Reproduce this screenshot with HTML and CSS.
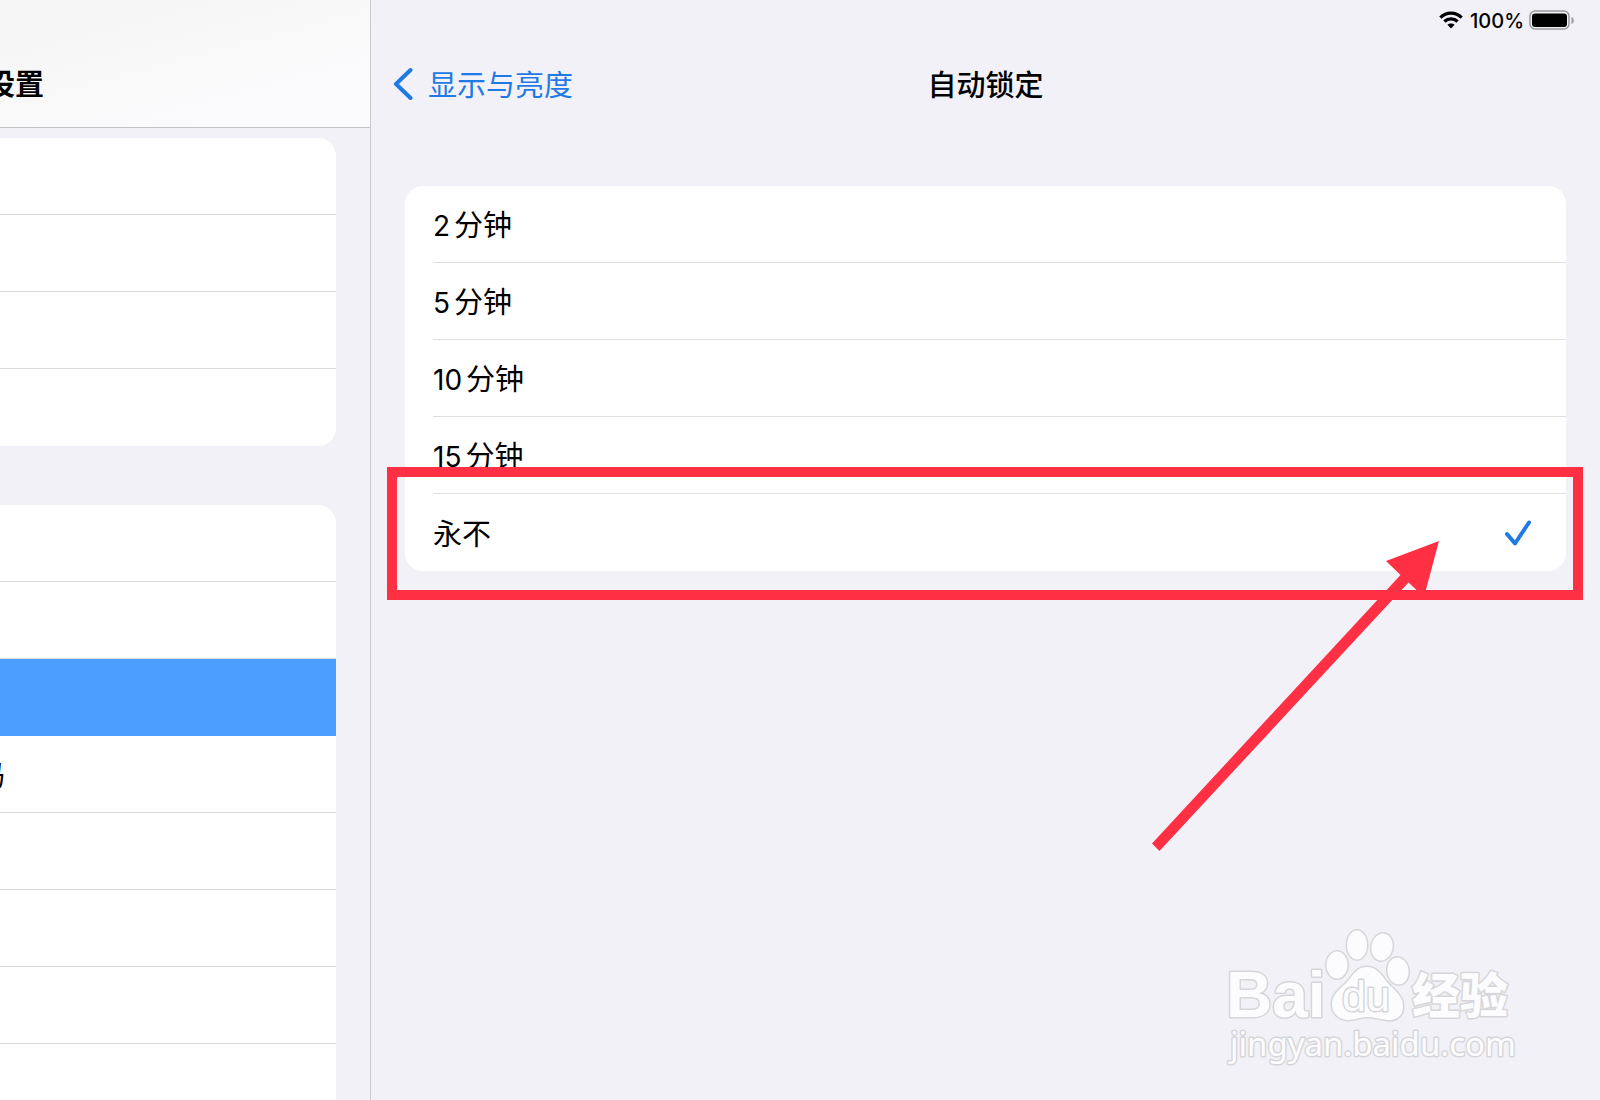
FILE: index.html
```html
<!DOCTYPE html>
<html lang="zh-CN">
<head>
<meta charset="utf-8">
<meta name="viewport" content="width=device-width, initial-scale=1">
<title>自动锁定</title>
<link rel="stylesheet" href="styles.css">
</head>
<body>
<div class="app">
  <aside class="sidebar">
    <header class="sidebar-head"><h2 class="sidebar-title">设置</h2></header>
    <nav class="sidebar-nav">
      <ul class="group">
        <li class="item"></li>
        <li class="item"></li>
        <li class="item"></li>
        <li class="item"></li>
      </ul>
      <ul class="group">
        <li class="item"></li>
        <li class="item"></li>
        <li class="item item-active"></li>
        <li class="item"><a class="item-link" href="#passcode">码</a></li>
        <li class="item"></li>
        <li class="item"></li>
        <li class="item"></li>
        <li class="item"></li>
      </ul>
    </nav>
  </aside>

  <main class="main">
    <div class="status">
      <svg class="wifi" width="24" height="18" viewBox="0 0 24 18" aria-hidden="true">
        <g fill="none" stroke="#000" stroke-width="3.4">
          <path d="M1.4 6.6C7.4 .6 16.600 .6 22.600 6.600"/>
          <path d="M5.400 10.600C9.200 7 14.800 7 18.600 10.600"/>
        </g>
        <path d="M12 17.400L8.400 13.800C10.400 12 13.600 12 15.600 13.800Z"/>
      </svg>
      <span class="percent">100%</span>
      <svg class="battery" width="46" height="20" viewBox="0 0 46 20" aria-hidden="true">
        <rect x="1" y="1" width="39" height="18" rx="5" fill="none" stroke="#9a9a9e" stroke-width="1.500"/>
        <rect x="3" y="3.500" width="35" height="13.500" rx="3"/>
        <path d="M42.500 7C45.500 8 45.500 13 42.500 14Z" fill="#9a9a9e"/>
      </svg>
    </div>

    <header class="bar">
      <a class="back" href="#display">
        <svg width="20" height="34" viewBox="0 0 20 34" aria-hidden="true"><path d="M17.500 3L3 17L17.500 31" fill="none" stroke="#1f7ae6" stroke-width="4" stroke-linecap="round" stroke-linejoin="round"/></svg>
        <span class="label">显示与亮度</span>
      </a>
      <h1 class="title label">自动锁定</h1>
    </header>

    <form class="options">
      <label class="option"><span class="name label"><span class="num">2</span>分钟</span><input class="radio" type="radio" name="lock"></label>
      <label class="option"><span class="name label"><span class="num">5</span>分钟</span><input class="radio" type="radio" name="lock"></label>
      <label class="option"><span class="name label"><span class="num">10</span>分钟</span><input class="radio" type="radio" name="lock"></label>
      <label class="option"><span class="name label"><span class="num">15</span>分钟</span><input class="radio" type="radio" name="lock"></label>
      <label class="option"><span class="name label">永不</span><input class="radio" type="radio" name="lock" checked>
        <svg class="check" width="28" height="28" viewBox="0 0 28 28" aria-hidden="true"><path d="M3 15L11 24.500L25 3.500" fill="none" stroke="#1f7ae6" stroke-width="4" stroke-linecap="round" stroke-linejoin="round"/></svg>
        <span class="mark-box"></span>
        <svg class="mark-arrow" width="300" height="320" viewBox="0 0 300 320" aria-hidden="true">
          <path fill="#ff3044" d="M299 1L246 21L260.500 35L12 303.500L19.500 311L268.500 42.500L284 57Z"/>
        </svg>
      </label>
    </form>

    <svg class="watermark" width="300" height="150" viewBox="0 0 300 150">
      <g class="wm-shape">
        <ellipse cx="117" cy="44" rx="10.500" ry="13.500"/>
        <ellipse cx="137" cy="24" rx="10" ry="14.500"/>
        <ellipse cx="162" cy="26" rx="10.500" ry="13.500" transform="rotate(12 162 26)"/>
        <ellipse cx="178" cy="50" rx="10.500" ry="13.500" transform="rotate(-8 178 50)"/>
        <path d="M147 46C156 46 161 53 166 60C172 68 183 73 183 86C183 95 176 100 167 99C158 98 154 96 147 96C140 96 136 99 127 99C118 98 112 92 112 83C112 72 122 67 129 59C134 52 138 46 147 46Z"/>
      </g>
      <text class="wm-text wm-bai" x="6" y="96">Bai</text>
      <text class="wm-text wm-du" x="122" y="90">du</text>
      <text class="wm-text wm-cn" x="192" y="92">经验</text>
      <text class="wm-text wm-url" x="10" y="135">jingyan.baidu.com</text>
    </svg>
  </main>
</div>
</body>
</html>
```
FILE: styles.css
```css
* { box-sizing: border-box; }

body {
  margin: 0;
  background: #f2f1f7;
  color: #000;
  font-family: Inter, "Noto Sans CJK SC", sans-serif;
  font-size: 29px;
  line-height: 40px;
}

.app {
  display: grid;
  grid-template-columns: 371px 1fr;
  height: 100vh;
  overflow: hidden;
}

/* Sidebar */
.sidebar {
  overflow: hidden;
  border-right: 1px solid #c9c9ce;
}

.sidebar-head {
  height: 128px;
  padding-top: 65px;
  border-bottom: 1px solid #c4c4c8;
  background: linear-gradient(165deg, #f6f6f6 20%, #fbfbfd 80%);
}

.sidebar-title {
  margin: 0 0 0 -14px;
  font-size: 29px;
  font-weight: 700;
}

.sidebar-nav {
  display: flex;
  flex-direction: column;
  gap: 59px;
  padding: 10px 34px 0 0;
}

.group {
  margin: 0;
  padding: 0;
  list-style: none;
  background: #fff;
  border-radius: 0 18px 18px 0;
}

.item {
  display: flex;
  align-items: center;
  height: 77px;
  border-bottom: 1px solid #dadadd;
}

.item:last-child { border-bottom: 0; }

.item-active {
  background: #4d9fff;
  border-color: #4d9fff;
}

.item-link {
  margin-left: -24px;
  padding-top: 4px;
  color: #000;
  text-decoration: none;
}

/* Detail pane */
.main { position: relative; }

/* Balances the high-sitting glyphs inside their line box */
.label { padding-top: 3px; }

.status {
  display: flex;
  align-items: center;
  height: 40px;
  padding-right: 25px;
  justify-content: flex-end;
}

.percent {
  margin: 0 5px 0 7px;
  padding-top: 1px;
  font-size: 20px;
  font-weight: 500;
}

.bar {
  display: grid;
  grid-template-columns: 1fr auto 1fr;
  align-items: center;
  height: 88px;
  padding: 0 22px;
}

.back {
  display: flex;
  align-items: center;
  gap: 15px;
  color: #1f7ae6;
  text-decoration: none;
}

.title {
  margin: 0;
  font-size: 29px;
  font-weight: 500;
}

.options {
  margin: 58px 34px 0;
  background: #fff;
  border-radius: 18px;
}

.option {
  position: relative;
  display: flex;
  align-items: center;
  height: 77px;
  margin-left: 28px;
  border-bottom: 1px solid #dfdfe2;
}

.option:last-child { border-bottom: 0; }

.name {
  flex: 1;
  padding-top: 4px;
}

.num {
  margin-right: 4px;
  font-size: 28px;
}

.radio {
  appearance: none;
  width: 0;
  height: 0;
  margin: 0;
}

.check { margin-right: 34px; }

/* Annotation over the chosen option */
.mark-box {
  position: absolute;
  inset: -27px -17px -29px -46px;
  border: 10px solid #ff3044;
}

.mark-arrow {
  position: absolute;
  top: 46px;
  right: 126px;
}

/* Watermark */
.watermark {
  position: absolute;
  right: 80px;
  bottom: 29px;
}

.wm-shape,
.wm-text {
  fill: #fcfcfe;
  stroke: #d6d6da;
  stroke-width: 3px;
  stroke-linejoin: round;
  paint-order: stroke;
}

.wm-bai { font: 700 64px "Liberation Sans", sans-serif; }
.wm-du { font: 400 43px "Liberation Sans", sans-serif; }
.wm-cn { font: 900 48px "Noto Sans CJK SC", sans-serif; }
.wm-url { font: 400 33px "Noto Sans", sans-serif; }
```
